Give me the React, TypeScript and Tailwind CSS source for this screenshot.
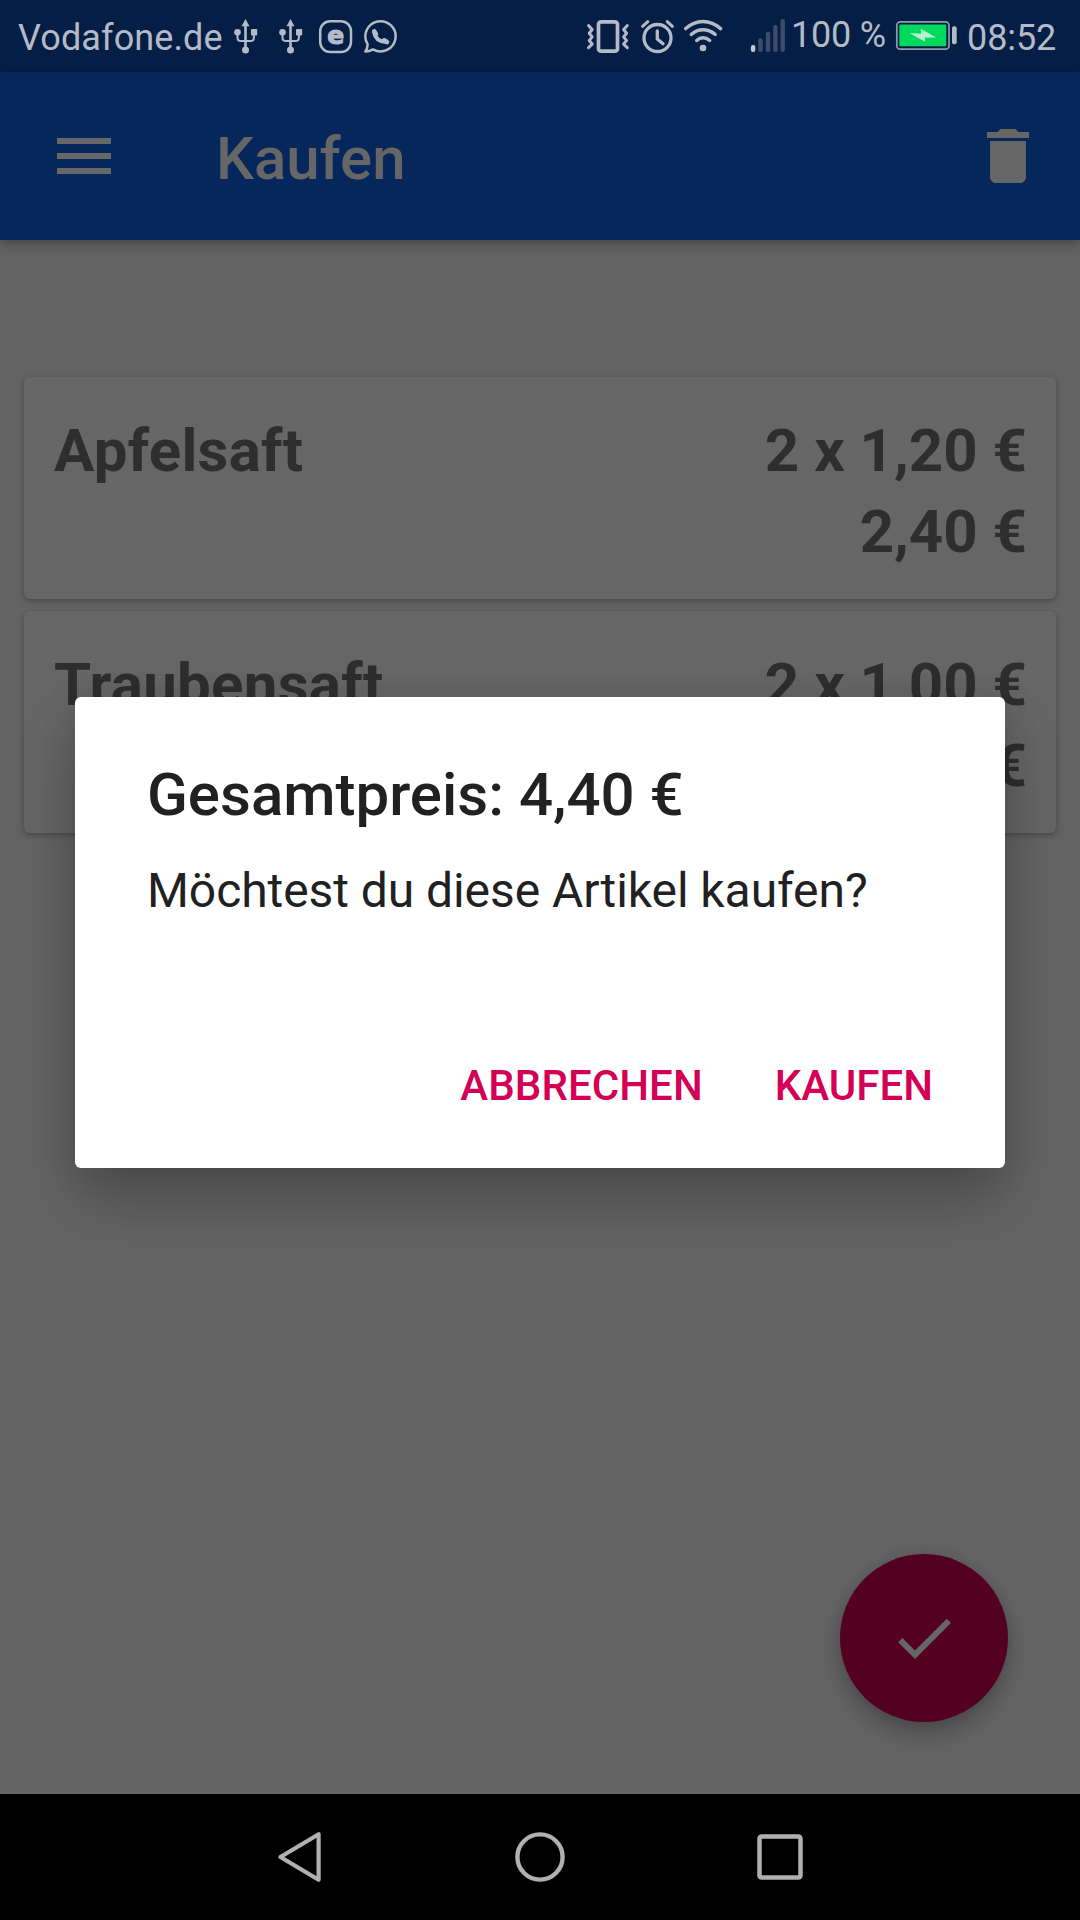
import React from "react";

const INK = "#b4bbc7";

function UsbIcon() {
  return (
    <svg viewBox="232 0 28 72" className="h-[72px] w-7 shrink-0" fill={INK}>
      <path d="M245.5 19l4 7.200h-8z" />
      <rect x="244.200" y="25" width="2.600" height="24" />
      <circle cx="245.500" cy="50" r="3.500" />
      <circle cx="237.500" cy="32.300" r="3.300" />
      <rect x="251" y="29" width="6.200" height="6.400" rx="0.800" />
      <path d="M237.500 33v4.500q0 3.600 3.600 3.600h9.200q3.600 0 3.600-3.600V34" fill="none" stroke={INK} strokeWidth="2" />
    </svg>
  );
}

function BadgeEIcon() {
  return (
    <svg viewBox="318 0 35 72" className="ml-[13px] h-[72px] w-[35px] shrink-0">
      <rect x="320.200" y="21.200" width="30.800" height="30.800" rx="10" fill="none" stroke={INK} strokeWidth="2.500" />
      <text x="335.800" y="43.900" textAnchor="middle" fontFamily="DejaVu Sans, sans-serif" fontWeight="700" fontSize="25" fill={INK} stroke={INK} strokeWidth="1.200">
        e
      </text>
    </svg>
  );
}

function WhatsAppIcon() {
  return (
    <svg viewBox="363 0 35 72" className="ml-2.5 h-[72px] w-[35px] shrink-0" fill="none" stroke={INK} strokeLinecap="round" strokeLinejoin="round">
      <path d="M367.700 44.300A15.100 15.100 0 1 1 373 49.400Q369.500 51.600 365.300 51.600Q367.500 48.500 367.700 44.300z" strokeWidth="2.500" />
      <path d="M374.200 32.500C375 38 379.500 41.500 386 42" strokeWidth="4" />
      <path d="M374.300 31.300L375.900 34" strokeWidth="4.600" />
      <path d="M384.200 40.300L387 42" strokeWidth="4.600" />
    </svg>
  );
}

function VibrateIcon() {
  return (
    <svg viewBox="586 0 44 72" className="h-[72px] w-11 shrink-0" fill="none" stroke={INK} strokeWidth="3" strokeLinecap="round" strokeLinejoin="round">
      <rect x="598.500" y="21.800" width="19" height="29.400" rx="2.500" strokeWidth="3.700" />
      <path d="M588.500 25.500l3.700 4-3 3.700 3 3.700-3 3.700 3 3.500-3.700 3.500" />
      <path d="M627.300 25.500l-3.700 4 3 3.700-3 3.700 3 3.700-3 3.500 3.700 3.500" />
    </svg>
  );
}

function AlarmIcon() {
  return (
    <svg viewBox="640 0 35 72" className="ml-2.5 h-[72px] w-[35px] shrink-0" fill="none" stroke={INK} strokeWidth="3.300" strokeLinecap="round" strokeLinejoin="round">
      <circle cx="657.500" cy="38" r="13.500" />
      <path d="M642.600 26.300l5.200-4.600M672.400 26.300l-5.200-4.600" strokeWidth="3" />
      <path d="M657.300 31v8l5.700 4.800" />
    </svg>
  );
}

function WifiIcon() {
  return (
    <svg viewBox="684 0 39 72" className="ml-[9px] h-[72px] w-[39px] shrink-0" fill="none" stroke={INK} strokeWidth="3.400" strokeLinecap="round">
      <path d="M685.700 28.600Q693.500 21.500 703 21.500T720.600 28.600" />
      <path d="M691.200 34.400Q696.500 29.700 703 29.700T715.200 34.400" />
      <path d="M696.700 40.500Q699.500 37.800 703 37.800T709.700 40.500" />
      <circle cx="703" cy="48" r="3.300" fill={INK} stroke="none" />
    </svg>
  );
}

function SignalIcon() {
  return (
    <svg viewBox="750 0 36 72" className="ml-[27px] h-[72px] w-9 shrink-0" fill="#3b4d6b">
      <rect x="750.900" y="45" width="4.400" height="7" rx="2" fill="#c3c9d3" />
      <rect x="758.300" y="38.300" width="4.400" height="13.700" rx="2" />
      <rect x="765.800" y="31.800" width="4.400" height="20.200" rx="2" />
      <rect x="773.200" y="25" width="4.400" height="27" rx="2" />
      <rect x="780.500" y="19" width="4.400" height="33" rx="2" />
    </svg>
  );
}

function BatteryIcon() {
  return (
    <svg viewBox="893 0 67 72" className="h-[72px] w-[67px] shrink-0">
      <rect x="896.800" y="21.800" width="52.200" height="27.400" rx="3.500" fill="none" stroke="#8f9bb0" strokeWidth="1.700" />
      <rect x="899.300" y="24.500" width="47" height="21.700" rx="1" fill="#00da5c" />
      <path d="M909.500 33l11.800.700-.800-5 15.800 8.800h-11.300v4.200z" fill="#b5f3cd" />
      <rect x="952" y="26.300" width="4.700" height="18" rx="2" fill={INK} />
    </svg>
  );
}

function StatusBar() {
  return (
    <div className="flex h-[72px] items-start bg-[#051e45] text-[36px] whitespace-nowrap text-[#b4bbc7]">
      <div className="w-[232px] shrink-0 pl-[18px] leading-[76px] tracking-[0.12px]">Vodafone.de</div>
      <UsbIcon />
      <div className="ml-[17px] flex">
        <UsbIcon />
      </div>
      <BadgeEIcon />
      <WhatsAppIcon />
      <div className="w-[188px] shrink-0" />
      <VibrateIcon />
      <AlarmIcon />
      <WifiIcon />
      <SignalIcon />
      <div className="w-[107px] shrink-0 pl-[5px] leading-[70px] tracking-[-0.2px]">100 %</div>
      <BatteryIcon />
      <div className="shrink-0 pl-[7px] leading-[76px] tracking-[-0.1px]">08:52</div>
    </div>
  );
}

function AppBar() {
  return (
    <header className="relative flex h-[168px] items-start bg-[#05275b] px-9 shadow-[0_4px_12px_rgba(0,0,0,0.32)]">
      <svg viewBox="0 0 24 24" className="mt-12 ml-3 size-[72px]" fill="#666666">
        <path d="M3 18h18v-2H3v2zm0-5h18v-2H3v2zm0-7v2h18V6H3z" />
      </svg>
      <h1 className="mt-[51px] ml-24 flex-1 text-[60px] leading-[72px] font-medium text-[#666666]">Kaufen</h1>
      <svg viewBox="0 0 24 24" className="mt-12 size-[72px]" fill="#666666">
        <path d="M6 19c0 1.100.900 2 2 2h8c1.100 0 2-.900 2-2V7H6v12zM19 4h-3.500l-1-1h-5l-1 1H5v2h14V4z" />
      </svg>
    </header>
  );
}

function ItemCard({ name, unit, total }: { name: string; unit: string; total: string }) {
  return (
    <li className="flex h-[222px] justify-between rounded-md bg-[#666666] pr-[29px] pl-[30px] pt-[33px] text-[60px] leading-[81px] font-bold text-[#2e2e2e] shadow-[0_2px_6px_rgba(0,0,0,0.3)]">
      <span className="tracking-[0.28px]">{name}</span>
      <span className="text-right">
        {unit}
        <br />
        {total}
      </span>
    </li>
  );
}

function NavBar() {
  return (
    <nav className="flex h-[126px] items-center justify-center gap-[180px] bg-black">
      <svg viewBox="0 0 60 60" className="size-[60px]" fill="none" stroke="#b0b0b0" strokeWidth="4.200" strokeLinejoin="round">
        <path d="M10.400 30L48.600 7.200V52.800z" />
      </svg>
      <svg viewBox="0 0 60 60" className="size-[60px]" fill="none" stroke="#b0b0b0" strokeWidth="4.400">
        <circle cx="30" cy="30" r="22.600" />
      </svg>
      <svg viewBox="0 0 60 60" className="size-[60px]" fill="none" stroke="#b0b0b0" strokeWidth="4.500">
        <rect x="9.500" y="9.500" width="41" height="41" rx="2" />
      </svg>
    </nav>
  );
}

export default function App() {
  return (
    <div className="relative flex h-[1920px] w-[1080px] flex-col overflow-hidden bg-[#646464] font-['Roboto',sans-serif]">
      <StatusBar />
      <AppBar />
      <main className="flex flex-1 flex-col px-6 pt-[137px]">
        <ul className="flex flex-col gap-3">
          <ItemCard name="Apfelsaft" unit="2 x 1,20 €" total="2,40 €" />
          <ItemCard name="Traubensaft" unit="2 x 1,00 €" total="2,00 €" />
        </ul>
        <button className="mt-auto mr-12 mb-[72px] flex size-[168px] items-center justify-center self-end rounded-full bg-[#540020] shadow-[0_12px_24px_rgba(0,0,0,0.25),0_0_12px_rgba(0,0,0,0.1)]">
          <svg viewBox="0 0 24 24" className="size-[72px]" fill="#666666">
            <path d="M9 16.170L4.830 12l-1.420 1.410L9 19 21 7l-1.410-1.410z" />
          </svg>
        </button>
      </main>
      <NavBar />

      <div role="dialog" className="absolute top-[697px] left-[75px] flex h-[471px] w-[930px] flex-col rounded-md bg-white px-[72px] pt-[62px] text-[#212121] shadow-[0_36px_60px_rgba(0,0,0,0.23),0_0_36px_rgba(0,0,0,0.1)]">
        <h2 className="text-[60px] leading-[72px] font-medium">Gesamtpreis: 4,40 €</h2>
        <p className="mt-[30px] text-[48px] leading-[60px] tracking-[-0.07px]">Möchtest du diese Artikel kaufen?</p>
        <div className="mt-[135px] flex justify-end gap-[72px] text-[42px] leading-[60px] font-medium text-[#d30055]">
          <button className="tracking-[0.08px]">ABBRECHEN</button>
          <button>KAUFEN</button>
        </div>
      </div>
    </div>
  );
}
